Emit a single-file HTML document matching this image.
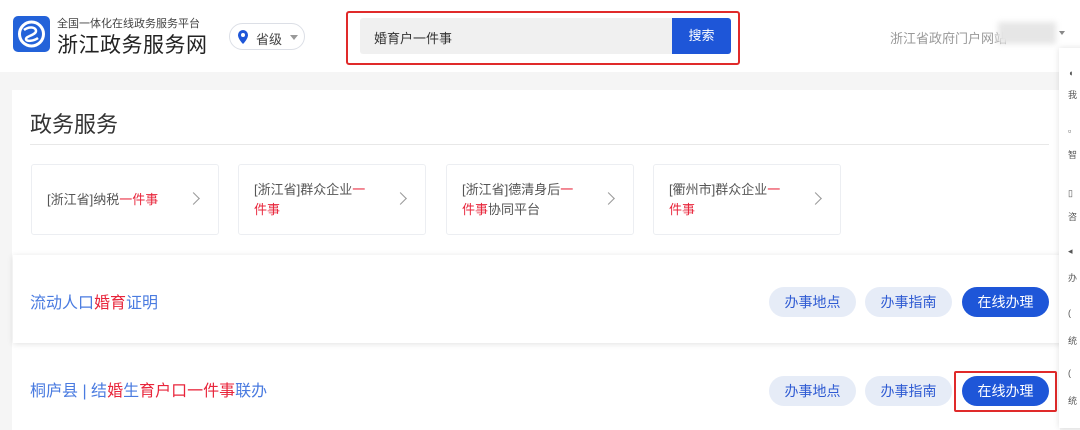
<!DOCTYPE html>
<html><head><meta charset="utf-8"><style>
*{margin:0;padding:0;box-sizing:border-box}
body{width:1080px;height:423px;overflow:hidden;background:#f5f5f5;font-family:"Liberation Sans","Noto Sans CJK SC",sans-serif;position:relative}
.a{position:absolute}
.r{color:#e8253b}
.tile{position:absolute;top:164px;width:188px;height:71px;background:#fff;border:1px solid #eceef2;border-radius:3px;font-size:13px;color:#555;line-height:20px;padding:0 0 0 15px;display:flex;align-items:center}
.tile .t{width:120px}
.tile .c{position:absolute;right:20px;top:29px;width:9px;height:9px;border-right:1.5px solid #999;border-top:1.5px solid #999;transform:rotate(45deg)}
.btn{position:absolute;height:30px;border-radius:15px;font-size:14px;line-height:30px;text-align:center}
.g{background:#e6ecf7;color:#2f5bd3;width:87px}
.b{background:#1e56d8;color:#fff;width:87px}
.side{position:absolute;left:1059px;top:48px;width:30px;height:380px;background:#fff;box-shadow:0 0 6px rgba(0,0,0,.12)}
.side span{position:absolute;left:9px;font-size:9px;color:#555}
</style></head><body>
<div class="a" style="left:0;top:0;width:1080px;height:72px;background:#fff"></div>
<div class="a" style="left:13px;top:16px;width:37px;height:36px;background:#2362d9;border-radius:5px"></div>
<svg class="a" style="left:13px;top:16px" width="37" height="36"><circle cx="18.5" cy="18" r="12" fill="none" stroke="#fff" stroke-width="3"/><path d="M11 14c5-4 12-3 12 1s-10 5-10 8 8 2 12 -1" fill="none" stroke="#fff" stroke-width="2.5"/></svg>
<div class="a" style="left:57px;top:15px;font-size:11px;color:#444">全国一体化在线政务服务平台</div>
<div class="a" style="left:57px;top:29px;font-size:21px;color:#222;letter-spacing:0.5px">浙江政务服务网</div>
<div class="a" style="left:229px;top:23px;width:76px;height:27px;border:1px solid #dcdfe6;border-radius:14px"></div>
<svg class="a" style="left:237px;top:29px" width="12" height="16"><path d="M6 1a5 5 0 0 1 5 5c0 4-5 9-5 9S1 10 1 6a5 5 0 0 1 5-5z" fill="#1e56d8"/><circle cx="6" cy="6" r="2" fill="#fff"/></svg>
<div class="a" style="left:256px;top:29px;font-size:13px;color:#444">省级</div>
<div class="a" style="left:290px;top:35px;border:4px solid transparent;border-top:5px solid #999"></div>
<div class="a" style="left:346px;top:11px;width:394px;height:54px;border:2px solid #e02a2a;border-radius:3px"></div>
<div class="a" style="left:360px;top:18px;width:313px;height:36px;background:#f0f0f0;border-radius:3px 0 0 3px"></div>
<div class="a" style="left:374px;top:28px;font-size:13px;color:#333">婚育户一件事</div>
<div class="a" style="left:672px;top:18px;width:59px;height:36px;background:#1e56d8;border-radius:0 3px 3px 0;color:#fff;font-size:13px;line-height:36px;text-align:center">搜索</div>
<div class="a" style="left:890px;top:28px;font-size:13px;color:#999">浙江省政府门户网站</div>
<div class="a" style="left:998px;top:22px;width:58px;height:22px;background:#e6e6e6;filter:blur(3px)"></div>
<div class="a" style="left:1059px;top:31px;border:3px solid transparent;border-top:4px solid #888"></div>

<div class="a" style="left:12px;top:90px;width:1048px;height:340px;background:#fff"></div>
<div class="a" style="left:30px;top:107px;font-size:22px;color:#333">政务服务</div>
<div class="a" style="left:30px;top:144px;width:1019px;height:1px;background:#e8e8e8"></div>
<div class="tile" style="left:31px"><div class="t">[浙江省]纳税<span class="r">一件事</span></div><i class="c"></i></div>
<div class="tile" style="left:238px"><div class="t">[浙江省]群众企业<span class="r">一件事</span></div><i class="c"></i></div>
<div class="tile" style="left:446px"><div class="t">[浙江省]德清身后<span class="r">一件事</span>协同平台</div><i class="c"></i></div>
<div class="tile" style="left:653px"><div class="t">[衢州市]群众企业<span class="r">一件事</span></div><i class="c"></i></div>

<div class="a" style="left:13px;top:255px;width:1049px;height:88px;background:#fff;box-shadow:0 1px 6px rgba(0,0,0,.12)"></div>
<div class="a" style="left:30px;top:289px;font-size:16px;color:#4a7be0">流动人口<span class="r">婚育</span>证明</div>
<div class="btn g" style="left:769px;top:287px">办事地点</div>
<div class="btn g" style="left:865px;top:287px">办事指南</div>
<div class="btn b" style="left:962px;top:287px">在线办理</div>

<div class="a" style="left:30px;top:377px;font-size:16px;color:#4a7be0">桐庐县 | 结<span class="r">婚</span>生<span class="r">育户口一件事</span>联办</div>
<div class="btn g" style="left:769px;top:376px">办事地点</div>
<div class="btn g" style="left:865px;top:376px">办事指南</div>
<div class="btn b" style="left:962px;top:376px">在线办理</div>
<div class="a" style="left:954px;top:371px;width:103px;height:41px;border:2px solid #e02a2a;border-radius:2px"></div>

<div class="side">
<span style="top:20px">◖</span><span style="top:40px">我</span>
<span style="top:78px">▫</span><span style="top:100px">智</span>
<span style="top:140px">▯</span><span style="top:162px">咨</span>
<span style="top:198px">◂</span><span style="top:223px">办</span>
<span style="top:260px">(</span><span style="top:286px">统</span>
<span style="top:320px">(</span><span style="top:346px">统</span>
</div>
</body></html>
